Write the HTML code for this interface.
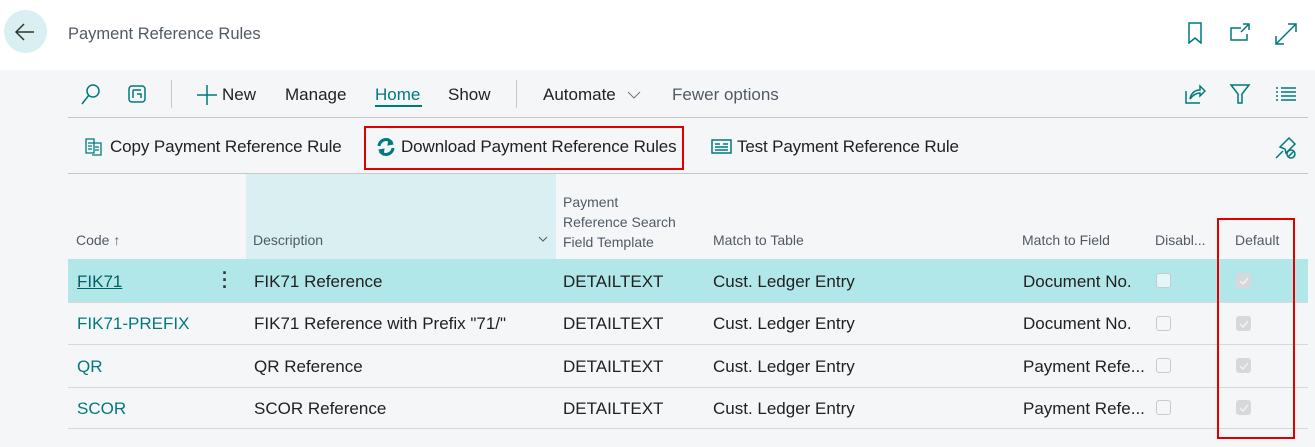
<!DOCTYPE html>
<html><head><meta charset="utf-8"><style>
*{box-sizing:border-box;margin:0;padding:0}
body{width:1315px;height:447px;overflow:hidden;background:#f5f6f8;font-family:"Liberation Sans",sans-serif;color:#212121;position:relative}
.a{position:absolute;white-space:nowrap}
.hdr{position:absolute;left:0;top:0;width:1315px;height:70px;background:#fff}
.t{color:#00797d}
svg{position:absolute;fill:none;stroke:#00797d;stroke-width:1.5}
.line{position:absolute;height:1px;background:#c8c8c8}
.hd{font-size:14px;color:#505a66}
.cell{font-size:17px}
.cb{position:absolute;width:15px;height:15px;border:1px solid #c8cbce;border-radius:3px;background:#f5f6f8}
.cd{position:absolute;width:15px;height:15px;border-radius:3px;background:#d6d8da}
</style></head><body>
<div class="hdr"></div>
<div class="a" style="left:4px;top:10px;width:43px;height:43px;border-radius:50%;background:#d9eff1"></div>
<svg style="left:12px;top:19px" width="26" height="26" viewBox="0 0 26 26"><path d="M22 13H4M12 5l-8 8 8 8" stroke="#333" stroke-width="1.5"/></svg>
<div class="a" style="left:68px;top:25px;font-size:16.5px;color:#505a66">Payment Reference Rules</div>
<svg style="left:1186px;top:22px" width="20" height="22" viewBox="0 0 20 22"><path d="M3 1h12v20l-6-5-6 5z"/></svg>
<svg style="left:1229px;top:22px" width="24" height="22" viewBox="0 0 24 22"><path d="M12 6H2v12h16v-6M14 2h6v6M20 2l-8 8"/></svg>
<svg style="left:1274px;top:22px" width="24" height="24" viewBox="0 0 24 24"><path d="M2 22L22 2M14 2h8v8M2 14v8h8"/></svg>

<svg style="left:80px;top:83px" width="22" height="24" viewBox="0 0 22 24"><circle cx="13" cy="8" r="6"/><path d="M9 12L2 21"/></svg>
<svg style="left:127px;top:84px" width="22" height="22" viewBox="0 0 22 22"><rect x="2" y="2" width="16" height="16" rx="3"/><path d="M6 6h8M6 6v8M10 10h4v4"/></svg>
<div class="a" style="left:171px;top:80px;width:1px;height:28px;background:#c8c8c8"></div>
<svg style="left:196px;top:84px" width="22" height="22" viewBox="0 0 22 22"><path d="M11 1v20M1 11h20"/></svg>
<div class="a cell" style="left:222px;top:85px">New</div>
<div class="a cell" style="left:285px;top:85px">Manage</div>
<div class="a cell t" style="left:375px;top:85px">Home</div>
<div class="a" style="left:375px;top:105px;width:47px;height:2px;background:#00797d"></div>
<div class="a cell" style="left:448px;top:85px">Show</div>
<div class="a" style="left:516px;top:80px;width:1px;height:28px;background:#c8c8c8"></div>
<div class="a cell" style="left:543px;top:85px">Automate</div>
<svg style="left:626px;top:89px" width="16" height="12" viewBox="0 0 16 12"><path d="M2 3l6 6 6-6" stroke="#777" stroke-width="1"/></svg>
<div class="a cell" style="left:672px;top:85px;color:#505a66">Fewer options</div>
<svg style="left:1184px;top:83px" width="22" height="22" viewBox="0 0 22 22"><path d="M2 8v12h14M6 16c1-6 5-9 10-9V3l5 5-5 5V10c-4 0-7 2-10 6z"/></svg>
<svg style="left:1229px;top:83px" width="22" height="22" viewBox="0 0 22 22"><path d="M2 2h18l-7 9v9h-4v-9z"/></svg>
<svg style="left:1275px;top:86px" width="22" height="16" viewBox="0 0 22 16"><path d="M1 2h2M6 2h15M1 6h2M6 6h15M1 10h2M6 10h15M1 14h2M6 14h15"/></svg>
<div class="line" style="left:68px;top:117px;width:1240px"></div>

<svg style="left:84px;top:137px" width="20" height="20" viewBox="0 0 20 20"><path d="M2 2h8v14H2zM8 6h9v12H8M4 6h4M4 9h4M4 12h4M11 10h4M11 13h4" stroke-width="1.3"/></svg>
<div class="a cell" style="left:110px;top:137px;letter-spacing:-0.1px">Copy Payment Reference Rule</div>
<svg style="left:376px;top:137px" width="20" height="20" viewBox="0 0 20 20"><path d="M3 9a7 7 0 0 1 13-3M17 11a7 7 0 0 1-13 3" stroke-width="3"/><path d="M13 2l4 5-5 1zM7 18l-4-5 5-1z" fill="#00797d" stroke-width="1"/></svg>
<div class="a cell" style="left:401px;top:137px;letter-spacing:-0.1px">Download Payment Reference Rules</div>
<div class="a" style="left:364px;top:126px;width:320px;height:44px;border:2px solid #e00000"></div>
<svg style="left:711px;top:138px" width="22" height="18" viewBox="0 0 22 18"><rect x="1" y="2" width="19" height="13"/><path d="M4 6h5M4 9h13M4 12h13M12 6h5"/></svg>
<div class="a cell" style="left:737px;top:137px;letter-spacing:-0.15px">Test Payment Reference Rule</div>
<svg style="left:1274px;top:136px" width="24" height="24" viewBox="0 0 24 24"><path d="M2 22l7-7M6 11l9-9 6 6-9 9-1-4z"/><circle cx="17" cy="18" r="4"/><path d="M14 21l6-6"/></svg>
<div class="line" style="left:68px;top:173px;width:1240px"></div>

<div class="a" style="left:246px;top:174px;width:310px;height:85px;background:#d9eff1"></div>
<div class="a hd" style="left:76px;top:232px">Code ↑</div>
<div class="a hd" style="left:253px;top:232px">Description</div>
<svg style="left:537px;top:234px" width="12" height="10" viewBox="0 0 12 10"><path d="M2 3l4 4 4-4" stroke="#505a66" stroke-width="1"/></svg>
<div class="a hd" style="left:563px;top:192px;line-height:20px">Payment<br>Reference Search<br>Field Template</div>
<div class="a hd" style="left:713px;top:232px">Match to Table</div>
<div class="a hd" style="left:1022px;top:232px">Match to Field</div>
<div class="a hd" style="left:1155px;top:232px">Disabl...</div>
<div class="a hd" style="left:1235px;top:232px">Default</div>

<div class="a" style="left:68px;top:259px;width:1240px;height:43px;background:#b2e7ea"></div>
<div class="line" style="left:68px;top:302px;width:1240px;background:#d6d8dc"></div>
<div class="line" style="left:68px;top:344px;width:1240px;background:#d6d8dc"></div>
<div class="line" style="left:68px;top:387px;width:1240px;background:#d6d8dc"></div>
<div class="line" style="left:68px;top:428px;width:1240px;background:#d6d8dc"></div>

<div class="a cell t" style="left:77px;top:272px;text-decoration:underline;color:#006064">FIK71</div>
<div class="a" style="left:222px;top:270px;font-size:18px;font-weight:bold;line-height:7px;color:#333">·<br>·<br>·</div>
<div class="a cell" style="left:254px;top:272px">FIK71 Reference</div>
<div class="a cell" style="left:563px;top:272px">DETAILTEXT</div>
<div class="a cell" style="left:713px;top:272px">Cust. Ledger Entry</div>
<div class="a cell" style="left:1023px;top:272px">Document No.</div>

<div class="a cell t" style="left:77px;top:314px">FIK71-PREFIX</div>
<div class="a cell" style="left:254px;top:314px">FIK71 Reference with Prefix "71/"</div>
<div class="a cell" style="left:563px;top:314px">DETAILTEXT</div>
<div class="a cell" style="left:713px;top:314px">Cust. Ledger Entry</div>
<div class="a cell" style="left:1023px;top:314px">Document No.</div>

<div class="a cell t" style="left:77px;top:357px">QR</div>
<div class="a cell" style="left:254px;top:357px">QR Reference</div>
<div class="a cell" style="left:563px;top:357px">DETAILTEXT</div>
<div class="a cell" style="left:713px;top:357px">Cust. Ledger Entry</div>
<div class="a cell" style="left:1023px;top:357px">Payment Refe...</div>

<div class="a cell t" style="left:77px;top:399px">SCOR</div>
<div class="a cell" style="left:254px;top:399px">SCOR Reference</div>
<div class="a cell" style="left:563px;top:399px">DETAILTEXT</div>
<div class="a cell" style="left:713px;top:399px">Cust. Ledger Entry</div>
<div class="a cell" style="left:1023px;top:399px">Payment Refe...</div>

<div class="cb" style="left:1156px;top:273px;background:#e4f6f7"></div>
<div class="cb" style="left:1156px;top:316px"></div>
<div class="cb" style="left:1156px;top:358px"></div>
<div class="cb" style="left:1156px;top:400px"></div>
<div class="cd" style="left:1236px;top:273px"></div>
<div class="cd" style="left:1236px;top:316px"></div>
<div class="cd" style="left:1236px;top:358px"></div>
<div class="cd" style="left:1236px;top:400px"></div>
<svg style="left:1236px;top:273px" width="15" height="140" viewBox="0 0 15 140"><path d="M4 8l3 3 5-6M4 51l3 3 5-6M4 93l3 3 5-6M4 135l3 3 5-6" stroke="#f2f2f2" stroke-width="1.5"/></svg>
<div class="a" style="left:1217px;top:218px;width:78px;height:221px;border:2px solid #e00000"></div>
</body></html>
